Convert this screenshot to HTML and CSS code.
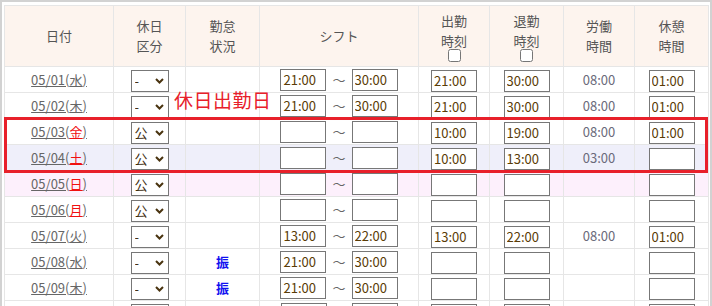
FILE: index.html
```html
<!DOCTYPE html>
<html lang="ja">
<head>
    <meta charset="UTF-8">
    <title>勤怠入力</title>
    <link rel="stylesheet" href="styles.css">
</head>
<body>
    <div class="sheet">
        <table class="attend">
            <colgroup>
                <col class="c-date">
                <col class="c-kind">
                <col class="c-state">
                <col class="c-shift">
                <col class="c-in">
                <col class="c-out">
                <col class="c-work">
                <col class="c-rest">
            </colgroup>
            <thead>
                <tr>
                    <th>日付</th>
                    <th>休日<br>区分</th>
                    <th>勤怠<br>状況</th>
                    <th>シフト</th>
                    <th>出勤<br>時刻<input type="checkbox" class="all"></th>
                    <th>退勤<br>時刻<input type="checkbox" class="all"></th>
                    <th>労働<br>時間</th>
                    <th>休憩<br>時間</th>
                </tr>
            </thead>
            <tbody>
                <tr>
                    <td><a href="#">05/01(<span class="wd">水</span>)</a></td>
                    <td><span class="pick"><select><option>-</option></select><svg viewBox="0 0 9 6"><path d="M1 1l3.5 3.5L8 1"/></svg></span></td>
                    <td></td>
                    <td><div class="shift"><input class="tm" value="21:00"><span>～</span><input class="tm" value="30:00"></div></td>
                    <td><input class="tm" value="21:00"></td>
                    <td><input class="tm" value="30:00"></td>
                    <td class="dur">08:00</td>
                    <td><input class="tm" value="01:00"></td>
                </tr>
                <tr>
                    <td><a href="#">05/02(<span class="wd">木</span>)</a></td>
                    <td><span class="pick"><select><option>-</option></select><svg viewBox="0 0 9 6"><path d="M1 1l3.5 3.5L8 1"/></svg></span></td>
                    <td></td>
                    <td><div class="shift"><input class="tm" value="21:00"><span>～</span><input class="tm" value="30:00"></div></td>
                    <td><input class="tm" value="21:00"></td>
                    <td><input class="tm" value="30:00"></td>
                    <td class="dur">08:00</td>
                    <td><input class="tm" value="01:00"></td>
                </tr>
                <tr>
                    <td><a href="#">05/03(<span class="wd hol">金</span>)</a></td>
                    <td><span class="pick"><select><option>公</option></select><svg viewBox="0 0 9 6"><path d="M1 1l3.5 3.5L8 1"/></svg></span></td>
                    <td></td>
                    <td><div class="shift"><input class="tm" value=""><span>～</span><input class="tm" value=""></div></td>
                    <td><input class="tm" value="10:00"></td>
                    <td><input class="tm" value="19:00"></td>
                    <td class="dur">08:00</td>
                    <td><input class="tm" value="01:00"></td>
                </tr>
                <tr class="sat">
                    <td><a href="#">05/04(<span class="wd hol">土</span>)</a></td>
                    <td><span class="pick"><select><option>公</option></select><svg viewBox="0 0 9 6"><path d="M1 1l3.5 3.5L8 1"/></svg></span></td>
                    <td></td>
                    <td><div class="shift"><input class="tm" value=""><span>～</span><input class="tm" value=""></div></td>
                    <td><input class="tm" value="10:00"></td>
                    <td><input class="tm" value="13:00"></td>
                    <td class="dur">03:00</td>
                    <td><input class="tm" value=""></td>
                </tr>
                <tr class="sun">
                    <td><a href="#">05/05(<span class="wd hol">日</span>)</a></td>
                    <td><span class="pick"><select><option>公</option></select><svg viewBox="0 0 9 6"><path d="M1 1l3.5 3.5L8 1"/></svg></span></td>
                    <td></td>
                    <td><div class="shift"><input class="tm" value=""><span>～</span><input class="tm" value=""></div></td>
                    <td><input class="tm" value=""></td>
                    <td><input class="tm" value=""></td>
                    <td class="dur"></td>
                    <td><input class="tm" value=""></td>
                </tr>
                <tr>
                    <td><a href="#">05/06(<span class="wd hol">月</span>)</a></td>
                    <td><span class="pick"><select><option>公</option></select><svg viewBox="0 0 9 6"><path d="M1 1l3.5 3.5L8 1"/></svg></span></td>
                    <td></td>
                    <td><div class="shift"><input class="tm" value=""><span>～</span><input class="tm" value=""></div></td>
                    <td><input class="tm" value=""></td>
                    <td><input class="tm" value=""></td>
                    <td class="dur"></td>
                    <td><input class="tm" value=""></td>
                </tr>
                <tr>
                    <td><a href="#">05/07(<span class="wd">火</span>)</a></td>
                    <td><span class="pick"><select><option>-</option></select><svg viewBox="0 0 9 6"><path d="M1 1l3.5 3.5L8 1"/></svg></span></td>
                    <td></td>
                    <td><div class="shift"><input class="tm" value="13:00"><span>～</span><input class="tm" value="22:00"></div></td>
                    <td><input class="tm" value="13:00"></td>
                    <td><input class="tm" value="22:00"></td>
                    <td class="dur">08:00</td>
                    <td><input class="tm" value="01:00"></td>
                </tr>
                <tr>
                    <td><a href="#">05/08(<span class="wd">水</span>)</a></td>
                    <td><span class="pick"><select><option>-</option></select><svg viewBox="0 0 9 6"><path d="M1 1l3.5 3.5L8 1"/></svg></span></td>
                    <td class="furi">振</td>
                    <td><div class="shift"><input class="tm" value="21:00"><span>～</span><input class="tm" value="30:00"></div></td>
                    <td><input class="tm" value=""></td>
                    <td><input class="tm" value=""></td>
                    <td class="dur"></td>
                    <td><input class="tm" value=""></td>
                </tr>
                <tr>
                    <td><a href="#">05/09(<span class="wd">木</span>)</a></td>
                    <td><span class="pick"><select><option>-</option></select><svg viewBox="0 0 9 6"><path d="M1 1l3.5 3.5L8 1"/></svg></span></td>
                    <td class="furi">振</td>
                    <td><div class="shift"><input class="tm" value="21:00"><span>～</span><input class="tm" value="30:00"></div></td>
                    <td><input class="tm" value=""></td>
                    <td><input class="tm" value=""></td>
                    <td class="dur"></td>
                    <td><input class="tm" value=""></td>
                </tr>
                <tr>
                    <td></td>
                    <td><span class="pick"><select><option></option></select></span></td>
                    <td></td>
                    <td><div class="shift"><input class="tm" value=""><span class="gap"></span><input class="tm" value=""></div></td>
                    <td><input class="tm" value=""></td>
                    <td><input class="tm" value=""></td>
                    <td class="dur"></td>
                    <td><input class="tm" value=""></td>
                </tr>
            </tbody>
        </table>
        <div class="mark-box"></div>
        <div class="mark-label">休日出勤日</div>
    </div>
</body>
</html>
```

FILE: styles.css
```css
html, body {
    margin: 0;
    padding: 0;
    overflow: hidden;
    background: #fff;
}
body {
    font-family: "Noto Sans CJK JP", "Noto Sans", sans-serif;
    font-size: 13px;
    color: #666;
}
.sheet {
    position: relative;
    width: 712px;
    height: 330px;
    box-sizing: border-box;
    border: 2px solid #d2d2d2;
    padding: 3px 2px 0 2px;
}
.attend {
    width: 704px;
    table-layout: fixed;
    border-collapse: collapse;
}
.c-date { width: 109px; }
.c-kind { width: 72px; }
.c-state { width: 74px; }
.c-shift { width: 159px; }
.c-in { width: 71px; }
.c-out { width: 74px; }
.c-work { width: 71px; }
.c-rest { width: 74px; }

.attend th,
.attend td {
    border: 1px solid #e6e6e6;
    padding: 0;
    text-align: center;
    vertical-align: middle;
}
.attend thead tr {
    height: 61px;
}
.attend th {
    background: #fdf4ee;
    color: #555;
    font-weight: normal;
    line-height: 20px;
}
.attend th .all {
    display: block;
    width: 13px;
    height: 13px;
    margin: -2px auto 0;
}
.attend tbody tr {
    height: 26px;
}
.attend td {
    line-height: 24px;
}
.attend tr.sat td { background: #efeffa; }
.attend tr.sun td { background: #fdf0fc; }

.attend a {
    color: #666;
    text-decoration: underline;
}
.wd { text-decoration: underline; }
.wd.hol { color: #f01010; }

.pick {
    position: relative;
    display: inline-block;
    vertical-align: middle;
    height: 22px;
}
.pick select {
    appearance: none;
    -webkit-appearance: none;
    width: 38px;
    height: 22px;
    box-sizing: border-box;
    border: 1px solid #777;
    border-radius: 0;
    background: #fff;
    padding: 0 0 0 3px;
    margin: 0;
    font-family: inherit;
    font-size: 13px;
    color: #3e2c0c;
    display: block;
}
.pick svg {
    position: absolute;
    right: 5px;
    top: 8px;
    width: 9px;
    height: 6px;
    pointer-events: none;
}
.pick svg path {
    fill: none;
    stroke: #4a3410;
    stroke-width: 2;
}

.tm {
    width: 46px;
    height: 22px;
    box-sizing: border-box;
    border: 1px solid #777;
    border-radius: 0;
    padding: 0 2px;
    margin: 0;
    font-family: inherit;
    font-size: 13px;
    color: #5a3c06;
    background: #fff;
    vertical-align: middle;
}
.shift {
    display: flex;
    justify-content: center;
    align-items: center;
    gap: 6px;
    color: #666;
}
.shift .gap {
    width: 13px;
}
.dur {
    color: #6a6a7a;
}
.furi {
    color: #1010f0;
    font-weight: bold;
}

.mark-box {
    position: absolute;
    left: 2px;
    top: 115px;
    width: 704px;
    height: 56px;
    box-sizing: border-box;
    border: 3px solid #e8202a;
    pointer-events: none;
}
.mark-label {
    position: absolute;
    left: 172px;
    top: 87px;
    font-size: 19px;
    line-height: 22px;
    letter-spacing: 0.5px;
    color: #e8202a;
    pointer-events: none;
}
```
